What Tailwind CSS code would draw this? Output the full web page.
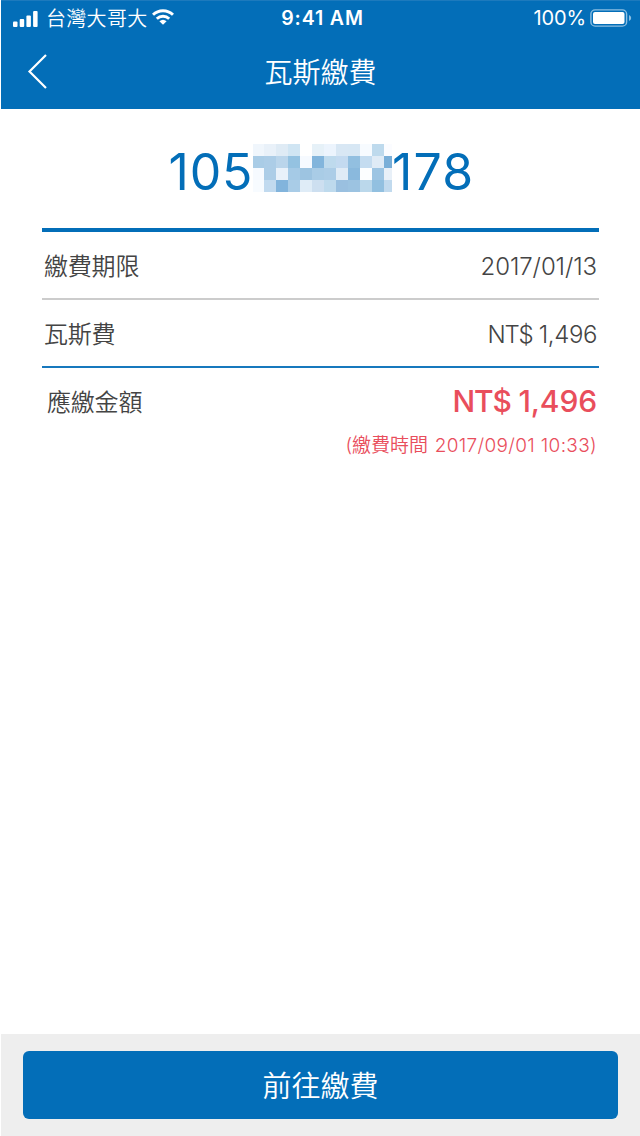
<!DOCTYPE html>
<html lang="zh-Hant">
<head>
<meta charset="utf-8">
<title>瓦斯繳費</title>
<script src="https://cdn.jsdelivr.net/npm/@tailwindcss/browser@4"></script>
</head>
<body class="bg-white font-['Inter','Noto_Sans_CJK_TC',sans-serif] font-[350]">
<div class="flex h-[1136px] w-[640px] flex-col pl-px whitespace-nowrap">
  <header class="h-[109px] bg-[#036eb8] text-white">
    <div class="grid h-9 grid-cols-3 items-center border-t border-[#1d7abd] pr-2 pl-3">
      <div class="flex items-center">
        <svg class="h-4 w-[25px]" viewBox="0 0 25 16" fill="currentColor"><rect y="10.500" width="4.500" height="5.500" rx="1"/><rect x="6.700" y="8" width="4.500" height="8" rx="1"/><rect x="13.400" y="4.500" width="4.500" height="11.500" rx="1"/><rect x="20.100" width="4.500" height="16" rx="1"/></svg>
        <span class="ml-2 text-[20px] leading-9 tracking-[0.3px]">台灣大哥大</span>
        <svg class="-mt-1 ml-1 h-4 w-[22px]" viewBox="0 0 22 16" fill="none" stroke="currentColor" stroke-width="2.900"><path d="M1 5.800C6.500 .3 15.500 .3 21 5.800M4.800 9.800C8.300 6.400 13.700 6.400 17.200 9.800"/><path d="M11 15.800 7.400 12.200Q11 9.200 14.600 12.200Z" fill="currentColor" stroke="none"/></svg>
      </div>
      <div class="pb-px text-center text-[19.5px] font-semibold tracking-[0.9px]">9:41 AM</div>
      <div class="flex items-center justify-end">
        <span class="pb-0.5 text-[20px] font-normal tracking-[-0.1px]">100%</span>
        <svg class="-mt-0.5 ml-[4px] h-[18px] w-[42px]" viewBox="0 0 42 18"><rect x=".9" y=".9" width="35.700" height="16.200" rx="4.200" fill="none" stroke="#8dbee1" stroke-width="1.400"/><rect x="3" y="3" width="31.500" height="12" rx="2" fill="#fff"/><path d="M39 6Q41.200 7 41.200 9T39 12Z" fill="#8dbee1"/></svg>
      </div>
    </div>
    <div class="grid h-[72px] grid-cols-3 items-center px-[26px]">
      <svg class="-mt-0.5 h-9 w-[22px]" viewBox="0 0 22 36" fill="none" stroke="currentColor" stroke-width="2.200"><path d="M19 2 2.500 18.500 19 35"/></svg>
      <h1 class="pt-0.5 text-center text-[28px]">瓦斯繳費</h1>
    </div>
  </header>

  <main class="flex-1 px-[41px]">
    <div class="flex h-[119px] items-start pt-[35px] text-[50px] leading-[56px] text-[#036eb8]">
      <span class="w-[211px] text-right font-[380] tracking-[0.7px]">105</span>
      <svg class="h-12 w-[139px]" viewBox="0 0 139 48" shape-rendering="crispEdges" id="mask"></svg>
      <span class="font-[380] tracking-[1.2px]">178</span>
    </div>
    <section class="border-t-4 border-[#036eb8] text-[24px] text-[#444]">
      <div class="flex h-[68px] items-center justify-between border-b-2 border-[#ccc] px-[2px] pt-1">
        <span class="tracking-[-0.2px]">繳費期限</span><span class="tracking-[-0.1px]">2017/01/13</span>
      </div>
      <div class="flex h-[68px] items-center justify-between border-b-2 border-[#1778bd] px-[2px] pt-1">
        <span class="tracking-[-0.2px]">瓦斯費</span><span class="tracking-[-0.4px]"><span class="tracking-[-1.2px]">NT$</span> 1,496</span>
      </div>
      <div class="flex h-[68px] items-center justify-between pr-[2px] pl-[5px] pt-0.5">
        <span class="tracking-[-0.2px]">應繳金額</span><span class="pb-1 text-[30px] font-[450] tracking-[-0.1px] text-[#e94e5c]"><span class="tracking-[-1.2px]">NT$</span> 1,496</span>
      </div>
      <p class="pr-[2px] text-right text-[19px] leading-5 text-[#e94e5c]">(繳費時間<span class="ml-px tracking-[0.33px]"> 2017/09/01 10:33)</span></p>
    </section>
  </main>

  <footer class="h-[102px] bg-[#eee] px-[22px] pt-[17px]">
    <button class="flex h-[68px] w-[595px] items-center justify-center rounded-md bg-[#036eb8] pt-[3px] text-[29px] text-white">前往繳費</button>
  </footer>
</div>
<script>
const rows = [
  'f0f6fc e9f1f9 dfebf5 d0e5f3 ffffff e6f1f8 ecf4fd d8e7f4 d7e7f4 f7fbff bedaed fbfcff',
  'a9cce6 accde7 bad5eb 94c2e1 f6faff 82b5dc bedaed c3daf0 92bfe0 c4dcf0 dfebf6 7aafd8',
  'f6faff accde7 e8f1fa a5cae6 9dc4e1 a9cce6 accde7 dfebf6 8ab9dd fcfeff 9dc5e3 e8f0f8',
  'f7fbff c1daef 82b4dc a9cce7 dfecf7 cddff0 bedaed 9ac0e0 9cc3e1 bbd8eb 92c0e0 c1daee'
];
document.getElementById('mask').innerHTML = rows.map((r, y) => r.split(' ').map((c, x) =>
  `<rect x="${x * 12 - 1}" y="${y * 12}" width="12" height="12" fill="#${c}"/>`).join('')).join('');
</script>
</body>
</html>
